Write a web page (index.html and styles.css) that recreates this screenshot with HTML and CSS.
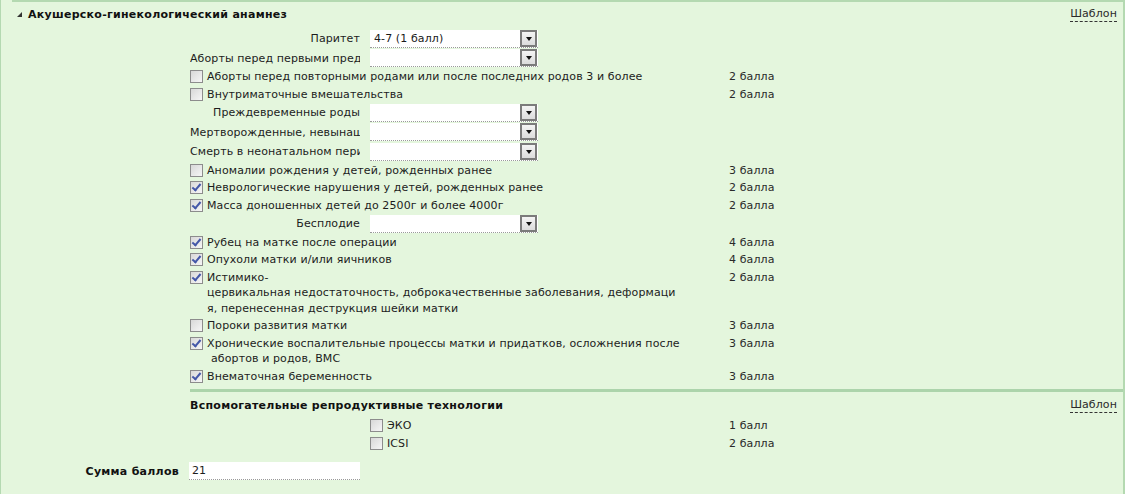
FILE: index.html
```html
<!DOCTYPE html>
<html lang="ru">
<head>
<meta charset="utf-8">
<link rel="stylesheet" href="styles.css">
</head>
<body>
<div class="panel">
  <div class="topline"></div>
  <div class="head">
    <span class="tri"></span>
    <span class="title">Акушерско-гинекологический анамнез</span>
    <span class="tpl">Шаблон</span>
  </div>

  <div class="content">
    <div class="srow"><span class="slabel">Паритет</span><span class="select"><span class="val">4-7 (1 балл)</span><span class="arrow"></span></span></div>
    <div class="srow"><span class="slabel">Аборты перед первыми предстоящими родами</span><span class="select"><span class="val"></span><span class="arrow"></span></span></div>
    <div class="crow"><span class="cb"></span><span class="ctext">Аборты перед повторными родами или после последних родов 3 и более</span><span class="pts">2 балла</span></div>
    <div class="crow"><span class="cb"></span><span class="ctext">Внутриматочные вмешательства</span><span class="pts">2 балла</span></div>
    <div class="srow"><span class="slabel">Преждевременные роды</span><span class="select"><span class="val"></span><span class="arrow"></span></span></div>
    <div class="srow"><span class="slabel">Мертворожденные, невынашивание</span><span class="select"><span class="val"></span><span class="arrow"></span></span></div>
    <div class="srow"><span class="slabel">Смерть в неонатальном периоде</span><span class="select"><span class="val"></span><span class="arrow"></span></span></div>
    <div class="crow"><span class="cb"></span><span class="ctext">Аномалии рождения у детей, рожденных ранее</span><span class="pts">3 балла</span></div>
    <div class="crow"><span class="cb on"></span><span class="ctext">Неврологические нарушения у детей, рожденных ранее</span><span class="pts">2 балла</span></div>
    <div class="crow"><span class="cb on"></span><span class="ctext">Масса доношенных детей до 2500г и более 4000г</span><span class="pts">2 балла</span></div>
    <div class="srow"><span class="slabel">Бесплодие</span><span class="select"><span class="val"></span><span class="arrow"></span></span></div>
    <div class="crow"><span class="cb on"></span><span class="ctext">Рубец на матке после операции</span><span class="pts">4 балла</span></div>
    <div class="crow"><span class="cb on"></span><span class="ctext">Опухоли матки и/или яичников</span><span class="pts">4 балла</span></div>
    <div class="crow"><span class="cb on"></span><span class="ctext"><span class="line">Истимико-</span><span class="line">цервикальная недостаточность, доброкачественные заболевания, деформаци</span><span class="line">я, перенесенная деструкция шейки матки</span></span><span class="pts">2 балла</span></div>
    <div class="crow"><span class="cb"></span><span class="ctext">Пороки развития матки</span><span class="pts">3 балла</span></div>
    <div class="crow"><span class="cb on"></span><span class="ctext"><span class="line">Хронические воспалительные процессы матки и придатков, осложнения после</span><span class="line indent">абортов и родов, ВМС</span></span><span class="pts">3 балла</span></div>
    <div class="crow"><span class="cb on"></span><span class="ctext">Внематочная беременность</span><span class="pts">3 балла</span></div>
  </div>

  <div class="divider"></div>
  <div class="subhead">
    <span class="title">Вспомогательные репродуктивные технологии</span>
    <span class="tpl">Шаблон</span>
  </div>
  <div class="art">
    <div class="arow"><span class="cb"></span><span class="atext">ЭКО</span><span class="pts">1 балл</span></div>
    <div class="arow"><span class="cb"></span><span class="atext">ICSI</span><span class="pts">2 балла</span></div>
  </div>
  <div class="sum">
    <span class="sumlabel">Сумма баллов</span>
    <span class="sumbox">21</span>
  </div>
</div>
</body>
</html>
```

FILE: styles.css
```css
html, body {
  margin: 0;
  padding: 0;
  height: 100%;
}
body {
  background: #e4f6dd;
  font-family: "DejaVu Sans", Verdana, sans-serif;
  font-size: 11px;
  letter-spacing: 0.1px;
  color: #1c1c1c;
}
.panel {
  height: 494px;
  box-sizing: border-box;
  border-left: 1px solid #b4d9b1;
  border-right: 2px solid #b4d9b1;
}
.topline {
  height: 2px;
  margin-left: 11px;
  background: #b4d9b1;
}
.head {
  display: flex;
  align-items: center;
  height: 24px;
  padding-left: 16px;
  padding-right: 6px;
}
.tri {
  width: 0;
  height: 0;
  border-left: 5px solid transparent;
  border-bottom: 5px solid #333;
  margin-right: 6px;
  margin-top: 1px;
}
.title {
  font-weight: bold;
  color: #111;
  letter-spacing: 0.27px;
}
.tpl {
  margin-left: auto;
  color: #2a2a2a;
  border-bottom: 1px dashed #333;
  line-height: 14px;
}
.content {
  padding-left: 189px;
  padding-top: 3px;
}
.srow {
  display: flex;
  align-items: center;
  height: 19.5px;
}
.slabel {
  width: 170px;
  text-align: right;
  white-space: nowrap;
  overflow: hidden;
  margin-right: 10px;
}
.select {
  display: flex;
  width: 168px;
  height: 17px;
  background: #fff;
  border-bottom: 1px dotted #9a9a9a;
}
.val {
  flex: 1;
  padding-left: 4px;
  line-height: 17px;
  color: #1a1a1a;
}
.arrow {
  width: 13px;
  height: 13px;
  margin-right: 1px;
  border: 2px solid #7b7b7b;
  background: linear-gradient(#f4f4f4, #dcdcdc);
  display: flex;
  align-items: center;
  justify-content: center;
}
.arrow::after {
  content: "";
  width: 0;
  height: 0;
  border-left: 3px solid transparent;
  border-right: 3px solid transparent;
  border-top: 4px solid #111;
  margin-top: 1px;
}
.crow {
  display: flex;
  align-items: flex-start;
  padding: 1px 0;
  line-height: 15.5px;
}
.cb {
  flex: none;
  width: 11px;
  height: 11px;
  border: 1px solid #8c8c8c;
  background: linear-gradient(135deg, #d8d8d8, #f6f6f6);
  margin-top: 1px;
  margin-right: 4px;
  position: relative;
}
.cb.on::after {
  content: "";
  position: absolute;
  left: 3px;
  top: 0;
  width: 3px;
  height: 7px;
  border-right: 2px solid #4457a8;
  border-bottom: 2px solid #4457a8;
  transform: rotate(40deg);
}
.ctext {
  width: 522px;
}
.line {
  display: block;
}
.line.indent {
  padding-left: 4px;
}
.pts {
  color: #2a2a2a;
}
.divider {
  margin-left: 189px;
  margin-top: 4px;
  height: 3px;
  background: #acd4ab;
}
.subhead {
  display: flex;
  align-items: center;
  padding-left: 189px;
  padding-right: 6px;
  height: 24px;
  margin-top: 1px;
}
.art {
  padding-left: 369px;
}
.arow {
  display: flex;
  align-items: flex-start;
  line-height: 15.5px;
  padding: 1px 0;
}
.atext {
  width: 342px;
}
.sum {
  display: flex;
  align-items: center;
  margin-top: 10px;
}
.sumlabel {
  width: 178px;
  text-align: right;
  font-weight: bold;
  color: #111;
  letter-spacing: 0.27px;
  margin-right: 10px;
}
.sumbox {
  width: 168px;
  height: 17px;
  line-height: 17px;
  padding-left: 3px;
  background: #fff;
  border-bottom: 1px dotted #9a9a9a;
}
```
